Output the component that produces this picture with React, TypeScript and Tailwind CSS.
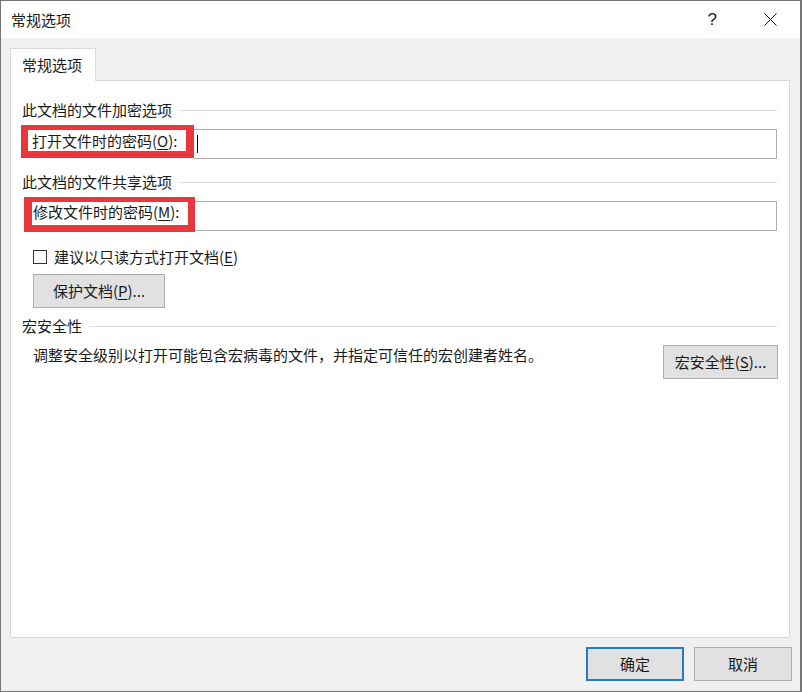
import React from "react";

const font = { fontFamily: '"Noto Sans CJK SC", "Liberation Sans", sans-serif' };

function SectionHeader({ title }: { title: string }) {
  return (
    <div className="flex items-center gap-[7px] h-[20px]">
      <span className="text-[15px] leading-[20px] whitespace-nowrap">{title}</span>
      <div className="flex-1 h-px bg-[#dcdcdc]" />
    </div>
  );
}

function Key({ k }: { k: string }) {
  return <span className="underline underline-offset-2">{k}</span>;
}

function PasswordRow({ label, k, cursor, boxClass }: { label: string; k: string; cursor?: boolean; boxClass: string }) {
  return (
    <div className="flex items-start">
      <div className={"bg-white border-[#e8383d] flex items-center " + boxClass}>
        <span className="text-[15px] leading-[20px] whitespace-nowrap">
          {label}(<Key k={k} />):
        </span>
      </div>
      <div className="flex-1 mt-[4px] h-[30px] border border-[#adadad] border-l-0 bg-white flex items-center">
        {cursor && <div className="ml-[3px] w-px h-[18px] bg-black" />}
      </div>
    </div>
  );
}

function Button({ children, className }: { children: React.ReactNode; className?: string }) {
  return (
    <div
      className={
        "flex items-center justify-center bg-[#e1e1e1] border border-[#adadad] text-[15px] leading-[20px] whitespace-nowrap " +
        (className ?? "")
      }
    >
      {children}
    </div>
  );
}

export default function App() {
  return (
    <div
      style={font}
      className="w-[802px] h-[692px] border border-[#767676] border-r-2 bg-[#f0f0f0] flex flex-col text-[#1a1a1a] overflow-hidden"
    >
      {/* title bar */}
      <div className="h-[37px] bg-white flex items-center">
        <span className="ml-[10px] text-[15px] leading-[20px]">常规选项</span>
        <div className="flex-1" />
        <span className="text-[17px] leading-[20px] text-[#222] mr-[47px]" style={{ fontFamily: '"Liberation Sans", sans-serif' }}>
          ?
        </span>
        <svg width="13" height="13" viewBox="0 0 13 13" className="mr-[23px]">
          <path d="M0.5 0.5 L12.5 12.5 M12.5 0.5 L0.5 12.5" stroke="#111" strokeWidth="1" fill="none" />
        </svg>
      </div>

      {/* body */}
      <div className="pt-[10px] pl-[9px] pr-[10px]">
        <div className="relative z-10 -mb-px w-[86px] h-[33px] bg-white border border-b-0 border-[#d9d9d9] flex items-center pl-[11px]">
          <span className="text-[15px] leading-[20px]">常规选项</span>
        </div>
        <div className="h-[558px] bg-white border border-[#d9d9d9] pl-[11px] pr-[12px] pt-[19px]">
          <SectionHeader title="此文档的文件加密选项" />
          <div className="mt-[5px]">
            <PasswordRow
              label="打开文件时的密码"
              k="O"
              cursor
              boxClass="w-[173px] h-[33px] border-l-[7px] border-t-[5px] border-b-[7px] border-r-[8px] pl-[4px] -ml-[1px]"
            />
          </div>
          <div className="mt-[13px]">
            <SectionHeader title="此文档的文件共享选项" />
          </div>
          <div className="mt-[5px] pl-[2px]">
            <PasswordRow
              label="修改文件时的密码"
              k="M"
              boxClass="w-[171px] h-[35px] border-l-[8px] border-t-[5px] border-b-[7px] border-r-[7px] pl-[1px] pt-[0px] items-start"
            />
          </div>
          <div className="mt-[15px] ml-[11px] flex items-center h-[20px]">
            <div className="w-[14px] h-[14px] border border-[#333] bg-white" />
            <span className="ml-[7px] text-[15px] leading-[20px]">
              建议以只读方式打开文档(<Key k="E" />)
            </span>
          </div>
          <Button className="mt-[7px] ml-[11px] w-[132px] h-[34px]">
            保护文档(<Key k="P" />)...
          </Button>
          <div className="mt-[8px]">
            <SectionHeader title="宏安全性" />
          </div>
          <div className="mt-[9px] flex items-start">
            <span className="ml-[11px] text-[15px] leading-[20px]">
              调整安全级别以打开可能包含宏病毒的文件，并指定可信任的宏创建者姓名。
            </span>
            <div className="flex-1" />
            <Button className="w-[115px] h-[34px] -mr-px">
              宏安全性(<Key k="S" />)...
            </Button>
          </div>
        </div>
      </div>

      {/* footer */}
      <div className="flex justify-end pt-[9px] pr-[8px] gap-[10px]">
        <div className="w-[98px] h-[34px] border-2 border-[#2b7bc0] bg-[#e1e1e1] flex items-center justify-center text-[15px] leading-[20px]">
          确定
        </div>
        <Button className="w-[98px] h-[34px]">取消</Button>
      </div>
    </div>
  );
}
